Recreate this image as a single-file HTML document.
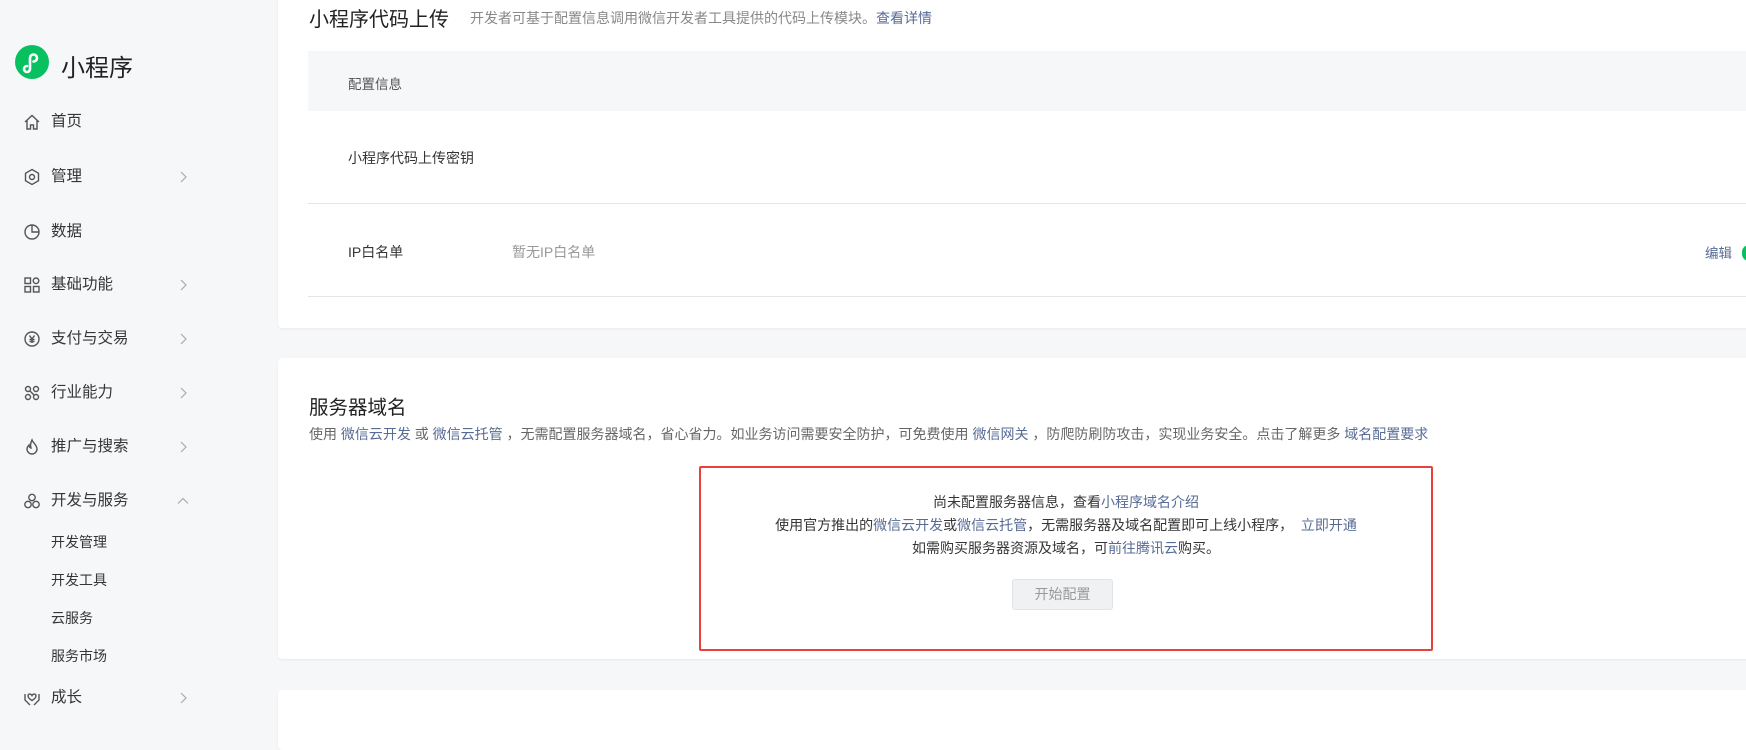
<!DOCTYPE html>
<html><head><meta charset="utf-8"><style>
*{margin:0;padding:0;box-sizing:border-box}
body{width:1746px;height:720px;overflow:hidden;background:#f6f7f9;font-family:"Liberation Sans","Noto Sans CJK SC",sans-serif;color:#353535;position:relative}
.abs{position:absolute;white-space:nowrap}
.side{position:absolute;left:0;top:0;width:278px;height:720px;background:#f6f7f9}
.mi{position:absolute;left:51px;font-size:15.5px;color:#353535;line-height:20px}
.ic{position:absolute;left:23px;width:18px;height:18px}
.chev{position:absolute;left:177px;width:12px;height:12px}
.sub{position:absolute;left:51px;font-size:14px;color:#353535;line-height:18px}
.card{position:absolute;left:278px;right:-10px;background:#fff;border-radius:4px;box-shadow:0 1px 2px rgba(0,0,0,.06)}
a{color:#576b95;text-decoration:none}
</style></head><body>
<div class="side">
  <svg class="abs" style="left:15px;top:45px" width="34" height="34" viewBox="0 0 34 34"><circle cx="17" cy="17" r="17" fill="#07c160"/><path d="M12 21a3 3 0 1 0 3 3V13a3.5 3.5 0 1 1 3.5 3.5" fill="none" stroke="#fff" stroke-width="2.6" stroke-linecap="round"/></svg>
  <div class="abs" style="left:61px;top:48px;font-size:24px;color:#222">小程序</div>

  <svg class="ic" style="top:113px" viewBox="0 0 18 18" fill="none" stroke="#555" stroke-width="1.4"><path d="M2 9L9 2.5 16 9M4 7.5V16h3.5v-4h3v4H14V7.5"/></svg>
  <div class="mi" style="top:112px">首页</div>

  <svg class="ic" style="top:168px" viewBox="0 0 18 18" fill="none" stroke="#555" stroke-width="1.4"><path d="M9 1.5l6.5 3.75v7.5L9 16.5 2.5 12.75v-7.5z"/><circle cx="9" cy="9" r="2.5"/></svg>
  <div class="mi" style="top:167px">管理</div>
  <svg class="chev" style="top:171px" viewBox="0 0 12 12" fill="none" stroke="#aaa" stroke-width="1.2"><path d="M4 1l5 5-5 5"/></svg>

  <svg class="ic" style="top:223px" viewBox="0 0 18 18" fill="none" stroke="#555" stroke-width="1.4"><circle cx="9" cy="9" r="7"/><path d="M9 2v7h7"/></svg>
  <div class="mi" style="top:222px">数据</div>

  <svg class="ic" style="top:276px" viewBox="0 0 18 18" fill="none" stroke="#555" stroke-width="1.4"><rect x="2" y="2" width="5.5" height="5.5"/><circle cx="13" cy="4.8" r="2.8"/><rect x="2" y="10.5" width="5.5" height="5.5"/><rect x="10.5" y="10.5" width="5.5" height="5.5"/></svg>
  <div class="mi" style="top:275px">基础功能</div>
  <svg class="chev" style="top:279px" viewBox="0 0 12 12" fill="none" stroke="#aaa" stroke-width="1.2"><path d="M4 1l5 5-5 5"/></svg>

  <svg class="ic" style="top:330px" viewBox="0 0 18 18" fill="none" stroke="#555" stroke-width="1.4"><circle cx="9" cy="9" r="7"/><path d="M6.5 5.5L9 9l2.5-3.5M9 9v4M6.5 9.5h5M6.5 11.5h5"/></svg>
  <div class="mi" style="top:329px">支付与交易</div>
  <svg class="chev" style="top:333px" viewBox="0 0 12 12" fill="none" stroke="#aaa" stroke-width="1.2"><path d="M4 1l5 5-5 5"/></svg>

  <svg class="ic" style="top:384px" viewBox="0 0 18 18" fill="none" stroke="#555" stroke-width="1.4"><circle cx="5" cy="5" r="2.5"/><circle cx="13" cy="5" r="2.5"/><circle cx="5" cy="13" r="2.5"/><circle cx="13" cy="13" r="2.5"/><path d="M7 7l4 4"/></svg>
  <div class="mi" style="top:383px">行业能力</div>
  <svg class="chev" style="top:387px" viewBox="0 0 12 12" fill="none" stroke="#aaa" stroke-width="1.2"><path d="M4 1l5 5-5 5"/></svg>

  <svg class="ic" style="top:438px" viewBox="0 0 18 18" fill="none" stroke="#555" stroke-width="1.4"><path d="M9 2c1 3 5 5 5 9a5 5 0 0 1-10 0c0-2 1-3 2-4 0 2 1 3 2 3-1-3 0-6 1-8z"/></svg>
  <div class="mi" style="top:437px">推广与搜索</div>
  <svg class="chev" style="top:441px" viewBox="0 0 12 12" fill="none" stroke="#aaa" stroke-width="1.2"><path d="M4 1l5 5-5 5"/></svg>

  <svg class="ic" style="top:492px" viewBox="0 0 18 18" fill="none" stroke="#555" stroke-width="1.4"><circle cx="9" cy="5.5" r="3.2"/><circle cx="5" cy="12.5" r="3.2"/><circle cx="13" cy="12.5" r="3.2"/></svg>
  <div class="mi" style="top:491px">开发与服务</div>
  <svg class="chev" style="top:495px" viewBox="0 0 12 12" fill="none" stroke="#aaa" stroke-width="1.2"><path d="M1 8.5l5-5 5 5"/></svg>

  <div class="sub" style="top:533px">开发管理</div>
  <div class="sub" style="top:571px">开发工具</div>
  <div class="sub" style="top:609px">云服务</div>
  <div class="sub" style="top:647px">服务市场</div>

  <svg class="ic" style="top:689px" viewBox="0 0 18 18" fill="none" stroke="#555" stroke-width="1.4"><path d="M9 6.5c-1-2-4-2-4 .5 0 2 4 4.5 4 4.5s4-2.5 4-4.5c0-2.5-3-2.5-4-.5zM2 5v6l5 5M16 5v6l-5 5"/></svg>
  <div class="mi" style="top:688px">成长</div>
  <svg class="chev" style="top:692px" viewBox="0 0 12 12" fill="none" stroke="#aaa" stroke-width="1.2"><path d="M4 1l5 5-5 5"/></svg>
</div>

<div class="card" style="top:-10px;height:338px">
  <div class="abs" style="left:31px;top:13px;font-size:20px;color:#222">小程序代码上传</div>
  <div class="abs" style="left:192px;top:18px;font-size:14px;color:#888">开发者可基于配置信息调用微信开发者工具提供的代码上传模块。<a>查看详情</a></div>
  <div class="abs" style="left:30px;top:61px;right:0;height:60px;background:#f6f7f9"></div>
  <div class="abs" style="left:70px;top:83px;font-size:13.5px;color:#555">配置信息</div>
  <div class="abs" style="left:70px;top:158px;font-size:14px;color:#353535">小程序代码上传密钥</div>
  <div class="abs" style="left:30px;top:213px;right:0;height:1px;background:#e5e5e5"></div>
  <div class="abs" style="left:70px;top:252px;font-size:14px;color:#353535">IP白名单</div>
  <div class="abs" style="left:234px;top:252px;font-size:14px;color:#999">暂无IP白名单</div>
  <div class="abs" style="left:1427px;top:252px;font-size:13.5px;color:#576b95">编辑</div>
  <div class="abs" style="left:1464px;top:255px;width:14px;height:16px;border-radius:7px;background:#07c160"></div>
  <div class="abs" style="left:30px;top:306px;right:0;height:1px;background:#e5e5e5"></div>
</div>

<div class="card" style="top:358px;height:301px">
  <div class="abs" style="left:31px;top:33px;font-size:19.5px;color:#222">服务器域名</div>
  <div class="abs" style="left:31px;top:66px;font-size:14px;color:#666">使用 <a>微信云开发</a> 或 <a>微信云托管</a> ，无需配置服务器域名，省心省力。如业务访问需要安全防护，可免费使用 <a>微信网关</a> ，防爬防刷防攻击，实现业务安全。点击了解更多 <a>域名配置要求</a></div>
  <div class="abs" style="left:421px;top:108px;width:734px;height:185px;border:2px solid #e8403a;border-radius:2px"></div>
  <div class="abs" style="left:421px;width:734px;top:133px;text-align:center;font-size:14px;line-height:23px;color:#353535">尚未配置服务器信息，查看<a>小程序域名介绍</a><br>使用官方推出的<a>微信云开发</a>或<a>微信云托管</a>，无需服务器及域名配置即可上线小程序，&nbsp; <a>立即开通</a><br>如需购买服务器资源及域名，可<a>前往腾讯云</a>购买。</div>
  <div class="abs" style="left:734px;top:221px;width:101px;height:31px;background:#f0f1f3;border:1px solid #e2e3e5;border-radius:3px;text-align:center;line-height:29px;font-size:14px;color:#999">开始配置</div>
</div>

<div class="card" style="top:690px;height:60px"></div>
</body></html>
